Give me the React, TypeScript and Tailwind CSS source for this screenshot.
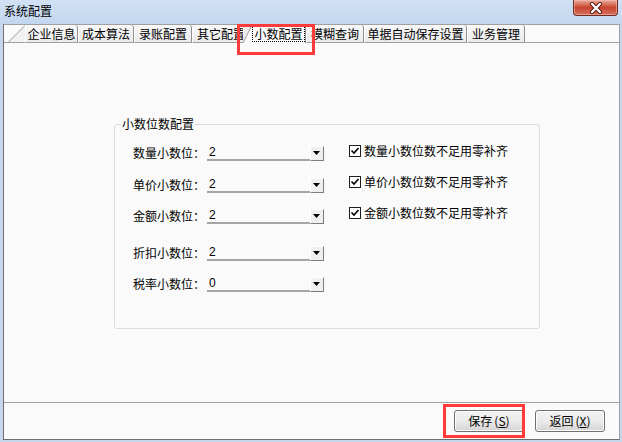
import React from "react";

const cjk = "font-['Noto_Sans_CJK_SC','Noto_Sans',sans-serif]";

function Tab({ label, w }: { label: string; w: number }) {
  return (
    <div
      className="h-full shrink-0 overflow-hidden whitespace-nowrap border-r border-b border-r-[#8e8f8f] border-b-[#a0a0a0] border-l border-l-white rounded-tr-[3px] bg-gradient-to-b from-[#f8f8f8] to-[#ebebeb] text-center text-[12px] leading-[17px] text-black"
      style={{ width: w }}
    >
      {label}
    </div>
  );
}

function Combo({ value }: { value: string }) {
  return (
    <div className="flex h-[15px] w-[117px] items-stretch">
      <div className="flex-1 border-b-2 border-[#a5a5a5] pl-[2px] font-['Liberation_Sans',sans-serif] text-[12px] leading-[13px] text-black">
        {value}
      </div>
      <div className="flex w-[14px] items-center justify-center border border-t-white border-l-white border-r-[#7c7c7c] border-b-[#7c7c7c] bg-[#efefef]">
        <svg width="8" height="5" viewBox="0 0 8 5">
          <polygon points="0,0 7,0 3.5,4" fill="#000" />
        </svg>
      </div>
    </div>
  );
}

function Check({ label }: { label: string }) {
  return (
    <div className="flex h-[16px] items-center gap-[3px]">
      <svg width="12" height="12" viewBox="0 0 12 12" className="shrink-0">
        <rect x="0.5" y="0.5" width="11" height="11" fill="#fff" stroke="#1e1e1e" />
        <path d="M2.5 5.5 L5 8 L9.5 3" fill="none" stroke="#000" strokeWidth="1.6" />
      </svg>
      <span className="text-[12px] leading-[14px] text-black whitespace-nowrap">{label}</span>
    </div>
  );
}

function Row({ label, value }: { label: string; value: string }) {
  return (
    <div className="flex h-[16px] items-center">
      <span className="w-[74px] text-[12px] leading-[14px] text-black whitespace-nowrap">{label}</span>
      <Combo value={value} />
    </div>
  );
}

function WinButton({ text, k }: { text: string; k: string }) {
  return (
    <div className="flex h-[22px] w-[70px] items-center justify-center rounded-[3px] border border-[#707070] bg-gradient-to-b from-[#f2f2f2] via-[#ebebeb] to-[#d4d4d4] shadow-[inset_0_0_0_1px_#fcfcfc] text-[12px] leading-[14px] text-black">
      {text}
      <span className="ml-[2px]">(</span>
      <span className="underline">{k}</span>
      <span>)</span>
    </div>
  );
}

export default function App() {
  return (
    <div className={`relative flex h-[442px] w-[622px] flex-col overflow-hidden bg-[#c4d7ed] ${cjk}`}>
      {/* title bar */}
      <div className="flex h-[24px] shrink-0 items-start justify-between bg-gradient-to-b from-[#d2e2f4] to-[#c2d6ee]">
        <span className="pl-[4px] pt-[4px] text-[12px] leading-[14px] text-black">系统配置</span>
        <div className="mr-[4px] flex h-[16px] w-[45px] items-center justify-center rounded-b-[4px] border border-t-0 border-[#6f2b22] bg-gradient-to-b from-[#e7a99d] via-[#c8452f] to-[#d3705d] shadow-[inset_0_0_0_1px_rgba(255,200,190,0.5)]">
          <svg width="14" height="12" viewBox="0 0 14 12">
            <path d="M3 2 L11 10 M11 2 L3 10" stroke="#5a1d16" strokeWidth="4" strokeLinecap="round" />
            <path d="M3 2 L11 10 M11 2 L3 10" stroke="#fff" strokeWidth="2.2" strokeLinecap="round" />
          </svg>
        </div>
      </div>

      {/* client area */}
      <div className="ml-[3px] mr-[2px] mb-[2px] flex flex-1 flex-col border border-t-[#a0a0a0] border-l-[#6e6e6e] border-r-[#a0a0a0] border-b-[#6e6e6e] bg-[#fafafa]">
        {/* tab strip */}
        <div className="flex h-[18px] shrink-0 items-stretch">
          <div className="w-[4px] border-b border-[#a0a0a0]" />
          <svg width="17" height="18" viewBox="0 0 17 18" className="shrink-0">
            <polygon points="0,17 17,0 17,17" fill="#f1f1f1" />
            <line x1="0" y1="17.5" x2="17" y2="0.5" stroke="#9a9a9a" />
            <line x1="0" y1="17.5" x2="17" y2="17.5" stroke="#a0a0a0" />
          </svg>
          <Tab label="企业信息" w={53} />
          <Tab label="成本算法" w={56} />
          <Tab label="录账配置" w={58} />
          <div className="h-full w-[51px] shrink-0 overflow-hidden whitespace-nowrap border-b border-l border-l-white border-b-[#a0a0a0] bg-gradient-to-b from-[#f8f8f8] to-[#ebebeb] pl-[4px] text-[12px] leading-[17px] text-black">
            其它配置
          </div>
          <svg width="9" height="18" viewBox="0 0 9 18" className="shrink-0 bg-[#eeeeee]">
            <polygon points="0,18 9,0 9,18" fill="#fcfcfc" />
            <line x1="0" y1="18" x2="9" y2="0" stroke="#9a9a9a" />
          </svg>
          <div className="flex h-full w-[54px] shrink-0 items-start justify-center border-r border-[#8e8f8f] bg-[#fcfcfc]">
            <span className="mt-[1px] border border-dotted border-black px-[1px] text-[12px] leading-[14px] text-black">
              小数配置
            </span>
          </div>
          <Tab label="模糊查询" w={58} />
          <Tab label="单据自动保存设置" w={103} />
          <Tab label="业务管理" w={58} />
          <div className="flex-1 border-b border-[#a0a0a0]" />
        </div>

        {/* tab panel */}
        <div className="h-[360px] shrink-0 border-b border-[#a0a0a0] bg-[#fafafa]">
          <div className="relative ml-[110px] mt-[81px] h-[205px] w-[426px] rounded-[3px] border border-[#d5dfe5]">
            <span className="absolute left-[6px] top-[-8px] bg-[#fafafa] px-[1px] text-[12px] leading-[14px] text-black">
              小数位数配置
            </span>
            <div className="flex pl-[18px] pt-[20px]">
              <div className="flex flex-col">
                <Row label="数量小数位：" value="2" />
                <div className="mt-[16px]">
                  <Row label="单价小数位：" value="2" />
                </div>
                <div className="mt-[15px]">
                  <Row label="金额小数位：" value="2" />
                </div>
                <div className="mt-[21px]">
                  <Row label="折扣小数位：" value="2" />
                </div>
                <div className="mt-[15px]">
                  <Row label="税率小数位：" value="0" />
                </div>
              </div>
              <div className="ml-[25px] -mt-[2px] flex flex-col gap-[15px]">
                <Check label="数量小数位数不足用零补齐" />
                <Check label="单价小数位数不足用零补齐" />
                <Check label="金额小数位数不足用零补齐" />
              </div>
            </div>
          </div>
        </div>

        {/* button bar */}
        <div className="flex flex-1 items-start justify-end gap-[11px] pr-[14px] pt-[7px]">
          <WinButton text="保存" k="S" />
          <WinButton text="返回" k="X" />
        </div>
      </div>

      {/* red annotations */}
      <div className="pointer-events-none absolute left-[237px] top-[24px] h-[31px] w-[78px] border-[3px] border-[#ff3b3b]" />
      <div className="pointer-events-none absolute left-[443px] top-[404px] h-[34px] w-[82px] border-[3px] border-[#ff3b3b]" />
    </div>
  );
}
